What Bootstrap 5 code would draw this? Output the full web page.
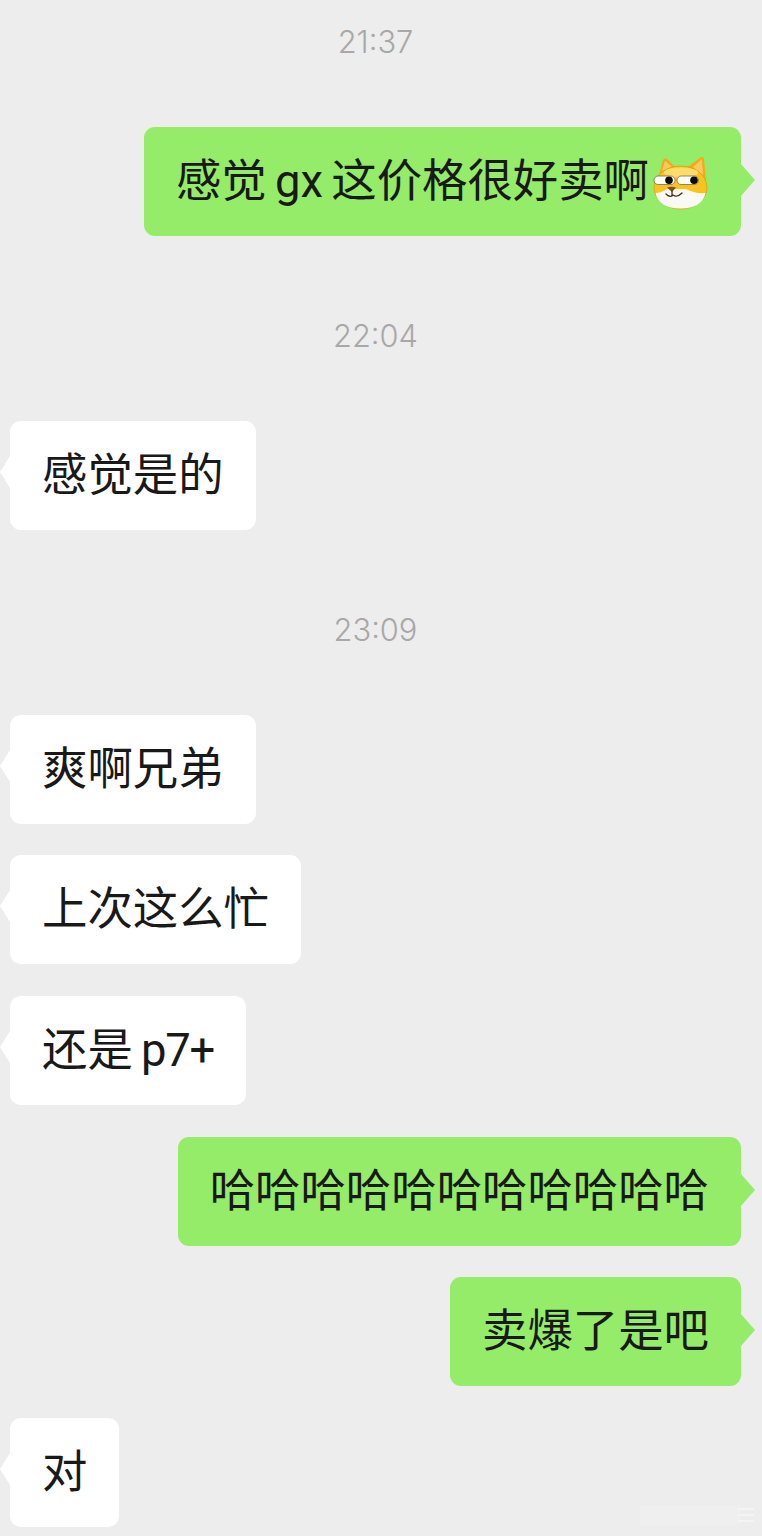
<!DOCTYPE html>
<html lang="zh">
<head>
<meta charset="utf-8">
<title>Chat</title>
<link href="https://cdn.jsdelivr.net/npm/bootstrap@5.3.0/dist/css/bootstrap.min.css" rel="stylesheet">
<style>
html,body{height:1536px;overflow:hidden}
body{background:#ededed;font-family:"Roboto","Noto Sans CJK SC",sans-serif;color:#191919}
.chat-log{padding:22px 21px 0 10px}
.stamp{font-size:30.800px;line-height:40px;color:#a8a8a8;text-align:center;font-family:"Inter","Roboto",sans-serif;font-weight:300}
.bubble-row{height:109px;margin-top:31.6px}
.stamp + .bubble-row{margin-top:64.8px}
.bubble-row + .stamp{margin-top:80.2px}
.bubble{position:relative;height:109px;padding:0 32px;font-size:45.400px;line-height:109px;border-radius:11px;white-space:nowrap;font-weight:400;word-spacing:-3px}
.bubble::after{content:"";position:absolute;width:0;height:0;border-top:16px solid transparent;border-bottom:16px solid transparent}
.from-me{background:#95ec69}
.from-me::after{top:37px;right:-14px;border-left:14px solid #95ec69}
.from-peer{background:#fff}
.from-peer::after{top:35px;left:-10px;border-right:10px solid #fff}
.sticker{width:56px;height:56px;vertical-align:-14px;margin-left:4px}
.latin-tight{letter-spacing:-1.300px}
.wm{position:absolute;right:4px;bottom:6px;width:118px;height:30px}
</style>
</head>
<body class="position-relative">
<main class="chat-log d-flex flex-column">
  <div class="stamp">21:37</div>
  <div class="bubble-row d-flex justify-content-end"><div class="bubble from-me">感觉 gx 这价格很好卖啊<svg class="sticker" viewBox="12 24 56 56" aria-hidden="true">
    <path d="M18 44 L22 29 Q24 26 26 28 L33 35 H48 L59 27 Q62 24 63 28 L65 50Z" fill="#f6a81a"/>
    <path d="M21 40 L24 30 L31 36Z M52 36 L61 28 L62 44Z" fill="#f8c95c"/>
    <ellipse cx="39.500" cy="56.500" rx="26.500" ry="21.500" fill="#f9c21e" stroke="#d49a18" stroke-width=".7"/>
    <ellipse cx="40" cy="41.500" rx="17" ry="5" fill="#fddc6c"/>
    <path d="M14.500 62 Q18 77.500 39.500 77.500 Q61 77.500 64.500 62 Q54 63 45 58 H26 Q20 62 14.500 62Z" fill="#fbf9f3"/>
    <rect x="13" y="45" width="21" height="8.500" rx="4.200" fill="#fff" stroke="#7c6a3c" stroke-width=".8"/>
    <rect x="36" y="45" width="21.500" height="8.500" rx="4.200" fill="#fff" stroke="#7c6a3c" stroke-width=".8"/>
    <circle cx="28" cy="49.300" r="3.800" fill="#0a0a0a"/>
    <circle cx="53" cy="49.300" r="3.800" fill="#0a0a0a"/>
    <path d="M26 56.500 Q30 55 35 56.500 L31 61Z" fill="#7a4f22"/>
    <path d="M31 60 V64 M25 63 Q29 67 32 64 Q36 67 41 62" fill="none" stroke="#4a3218" stroke-width="1.300" stroke-linecap="round"/>
  </svg></div></div>
  <div class="stamp">22:04</div>
  <div class="bubble-row d-flex"><div class="bubble from-peer">感觉是的</div></div>
  <div class="stamp">23:09</div>
  <div class="bubble-row d-flex"><div class="bubble from-peer">爽啊兄弟</div></div>
  <div class="bubble-row d-flex"><div class="bubble from-peer">上次这么忙</div></div>
  <div class="bubble-row d-flex"><div class="bubble from-peer">还是 <span class="latin-tight">p7+</span></div></div>
  <div class="bubble-row d-flex justify-content-end"><div class="bubble from-me">哈哈哈哈哈哈哈哈哈哈哈</div></div>
  <div class="bubble-row d-flex justify-content-end"><div class="bubble from-me">卖爆了是吧</div></div>
  <div class="bubble-row d-flex"><div class="bubble from-peer">对</div></div>
</main>
<svg class="wm" viewBox="0 0 118 30" aria-hidden="true">
  <rect x="0" y="5" width="100" height="20" fill="#f2f2f2" opacity=".45"/>
  <path d="M98 9 H114 M98 15 H114 M98 21 H114" stroke="#f6f6f6" stroke-width="1.500"/>
</svg>
</body>
</html>
